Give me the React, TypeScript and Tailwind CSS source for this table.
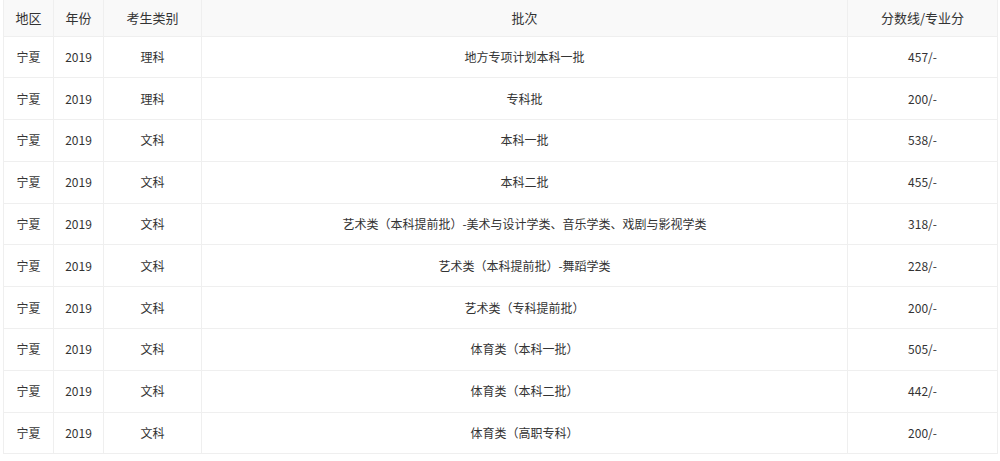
import React from "react";

const rows: [string, string, string, string, string][] = [
  ["宁夏", "2019", "理科", "地方专项计划本科一批", "457/-"],
  ["宁夏", "2019", "理科", "专科批", "200/-"],
  ["宁夏", "2019", "文科", "本科一批", "538/-"],
  ["宁夏", "2019", "文科", "本科二批", "455/-"],
  ["宁夏", "2019", "文科", "艺术类（本科提前批）-美术与设计学类、音乐学类、戏剧与影视学类", "318/-"],
  ["宁夏", "2019", "文科", "艺术类（本科提前批）-舞蹈学类", "228/-"],
  ["宁夏", "2019", "文科", "艺术类（专科提前批）", "200/-"],
  ["宁夏", "2019", "文科", "体育类（本科一批）", "505/-"],
  ["宁夏", "2019", "文科", "体育类（本科二批）", "442/-"],
  ["宁夏", "2019", "文科", "体育类（高职专科）", "200/-"],
];

const headers = ["地区", "年份", "考生类别", "批次", "分数线/专业分"];
const widths = ["w-[50px]", "w-[50px]", "w-[98px]", "w-[646px]", "w-[150px]"];

export default function App() {
  return (
    <div
      className="bg-white w-[1000px] h-[461px] overflow-hidden pl-[3px]"
      style={{ fontFamily: '"Microsoft YaHei", "Noto Sans CJK SC", "Noto Sans", sans-serif' }}
    >
      <table className="border-collapse table-fixed w-[994px] text-[#333]">
        <thead>
          <tr className="h-[36px] bg-[#f9f9f9]">
            {headers.map((h, i) => (
              <th key={h} className={`${widths[i]} border border-[#efefef] border-t-0 text-[13px] font-normal text-center`}>
                {h}
              </th>
            ))}
          </tr>
        </thead>
        <tbody>
          {rows.map((r, ri) => (
            <tr key={ri} className="h-[41.8px]">
              {r.map((c, ci) => (
                <td key={ci} className="border border-[#efefef] text-[12px] text-center">
                  {c}
                </td>
              ))}
            </tr>
          ))}
        </tbody>
      </table>
    </div>
  );
}
